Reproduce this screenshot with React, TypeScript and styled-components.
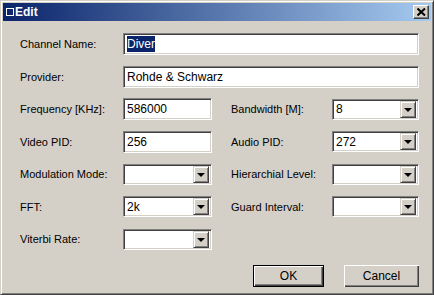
import React from 'react'
import styled, { createGlobalStyle } from 'styled-components'

const GlobalStyle = createGlobalStyle`
  html, body {
    margin: 0;
    padding: 0;
    background: #d4d0c8;
  }
  body {
    font-family: "Liberation Sans", Arial, sans-serif;
    font-size: 11px;
    color: #000;
  }
`

const Window = styled.div`
  width: 434px;
  height: 295px;
  box-sizing: border-box;
  background: #d4d0c8;
  border-top: 1px solid #d4d0c8;
  border-left: 1px solid #d4d0c8;
  border-right: 1px solid #404040;
  border-bottom: 1px solid #404040;
  box-shadow: inset 1px 1px #ffffff, inset -1px -1px #808080;
  padding: 2px;
  display: flex;
  flex-direction: column;
`

const TitleBar = styled.div`
  height: 18px;
  background: linear-gradient(to right, #0a246a, #a6caf0);
  display: flex;
  align-items: center;
  padding: 0 3px 0 3px;
  color: #fff;
  font-weight: bold;
  font-size: 12px;
`

const TitleIcon = styled.span`
  width: 6px;
  height: 6px;
  border: 1px solid #fff;
  margin-right: 1px;
`

const TitleText = styled.span`
  flex: 1;
`

const CloseButton = styled.div`
  width: 16px;
  height: 14px;
  box-sizing: border-box;
  background: #d4d0c8;
  border-top: 1px solid #fff;
  border-left: 1px solid #fff;
  border-right: 1px solid #404040;
  border-bottom: 1px solid #404040;
  box-shadow: inset -1px -1px #808080;
  display: flex;
  align-items: center;
  justify-content: center;
  margin-right: -1px;
`

const Form = styled.div`
  display: grid;
  grid-template-columns: 103px 89px 19px 101px 87px;
  grid-auto-rows: 22px;
  row-gap: 10.5px;
  padding: 12px 0 0 17px;
  align-items: center;
`

const Label = styled.label<{ $col?: number }>`
  grid-column: ${({ $col }) => $col ?? 1};
  white-space: nowrap;
`

const Field = styled.div<{ $col?: number; $wide?: boolean }>`
  grid-column: ${({ $col, $wide }) => ($wide ? '2 / 6' : $col ?? 2)};
  height: 22px;
  box-sizing: border-box;
  background: #fff;
  border-top: 1px solid #808080;
  border-left: 1px solid #808080;
  border-right: 1px solid #fff;
  border-bottom: 1px solid #fff;
  box-shadow: inset 1px 1px #404040, inset -1px -1px #d4d0c8;
  padding: 0 2px 0 3px;
  display: flex;
  align-items: center;
  font-size: 12px;
`

const Combo = styled(Field)`
  height: 21px;
  padding: 2px 2px 2px 3px;
  justify-content: space-between;
`

const Selected = styled.span`
  background: #0a246a;
  color: #fff;
  padding: 1px 0;
`

const DropButton = styled.div`
  width: 16px;
  height: 17px;
  box-sizing: border-box;
  background: #d4d0c8;
  border-top: 1px solid #d4d0c8;
  border-left: 1px solid #d4d0c8;
  border-right: 1px solid #404040;
  border-bottom: 1px solid #404040;
  box-shadow: inset 1px 1px #fff, inset -1px -1px #808080;
  display: flex;
  align-items: center;
  justify-content: center;
`

const Arrow = styled.span`
  width: 0;
  height: 0;
  border-left: 4px solid transparent;
  border-right: 4px solid transparent;
  border-top: 4px solid #000;
  margin-top: 1px;
`

const Buttons = styled.div`
  grid-column: 1 / 6;
  display: flex;
  justify-content: flex-end;
  gap: 20px;
  margin-top: 8px;
`

const Button = styled.button<{ $default?: boolean; $width: number }>`
  width: ${({ $width }) => $width}px;
  height: 22px;
  box-sizing: border-box;
  padding: 0;
  font-family: "Liberation Sans", Arial, sans-serif;
  font-size: 12px;
  color: #000;
  background: #d4d0c8;
  border: ${({ $default }) => ($default ? '1px solid #000' : 'none')};
  box-shadow: inset 1px 1px #fff, inset -1px -1px #404040, inset -2px -2px #808080;
`

const DropDown = ({ value, col }: { value?: string; col?: number }) => (
  <Combo $col={col}>
    <span>{value}</span>
    <DropButton>
      <Arrow />
    </DropButton>
  </Combo>
)

const App = () => (
  <>
    <GlobalStyle />
    <Window>
      <TitleBar>
        <TitleIcon />
        <TitleText>Edit</TitleText>
        <CloseButton>
          <svg width="9" height="8" viewBox="0 0 9 8">
            <path d="M0.5 0.5 L8 7.5 M8 0.5 L0.5 7.5" stroke="#000" strokeWidth="2" />
          </svg>
        </CloseButton>
      </TitleBar>
      <Form>
        <Label>Channel Name:</Label>
        <Field $wide>
          <Selected>Diver</Selected>
        </Field>

        <Label>Provider:</Label>
        <Field $wide>Rohde &amp; Schwarz</Field>

        <Label>Frequency [KHz]:</Label>
        <Field>586000</Field>
        <Label $col={4}>Bandwidth [M]:</Label>
        <DropDown col={5} value="8" />

        <Label>Video PID:</Label>
        <Field>256</Field>
        <Label $col={4}>Audio PID:</Label>
        <DropDown col={5} value="272" />

        <Label>Modulation Mode:</Label>
        <DropDown col={2} />
        <Label $col={4}>Hierarchial Level:</Label>
        <DropDown col={5} />

        <Label>FFT:</Label>
        <DropDown col={2} value="2k" />
        <Label $col={4}>Guard Interval:</Label>
        <DropDown col={5} />

        <Label>Viterbi Rate:</Label>
        <DropDown col={2} />

        <Buttons>
          <Button $default $width={71}>OK</Button>
          <Button $width={75}>Cancel</Button>
        </Buttons>
      </Form>
    </Window>
  </>
)

export default App
